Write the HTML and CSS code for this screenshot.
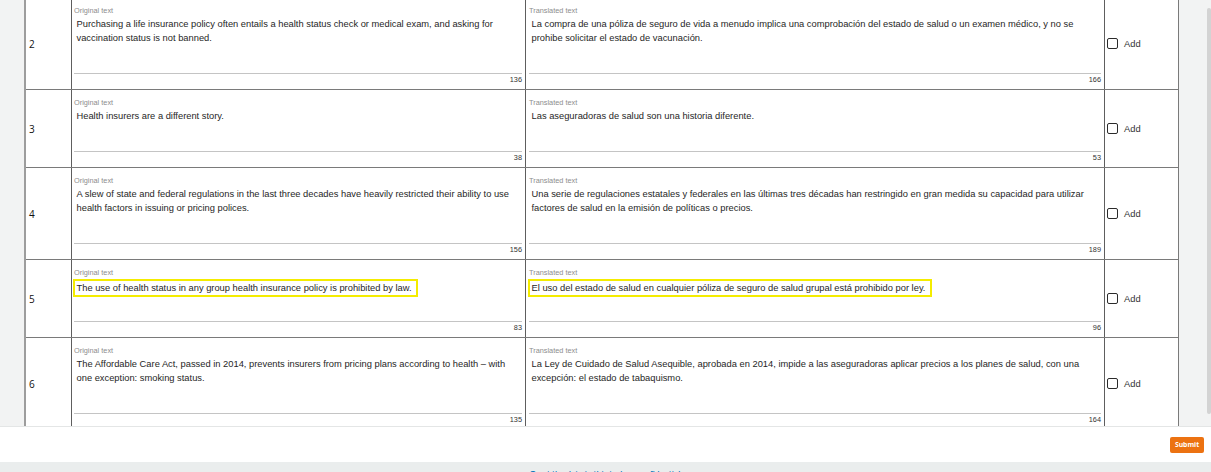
FILE: index.html
```html
<!DOCTYPE html>
<html lang="en">
<head>
<meta charset="utf-8">
<title>Translation review</title>
<link rel="stylesheet" href="styles.css">
</head>
<body>
<div class="page">
  <div class="scroller">
    <div class="grid">
      <div class="row">
        <div class="num">2</div>
        <div class="cell orig">
          <div class="lbl">Original text</div>
          <div class="txt">Purchasing a life insurance policy often entails a health status check or medical exam, and asking for vaccination status is not banned.</div>
          <div class="cnt">136</div>
        </div>
        <div class="cell trans">
          <div class="lbl">Translated text</div>
          <div class="txt">La compra de una póliza de seguro de vida a menudo implica una comprobación del estado de salud o un examen médico, y no se prohibe solicitar el estado de vacunación.</div>
          <div class="cnt">166</div>
        </div>
        <label class="add"><span class="box"></span><span>Add</span></label>
      </div>
      <div class="row">
        <div class="num">3</div>
        <div class="cell orig">
          <div class="lbl">Original text</div>
          <div class="txt">Health insurers are a different story.</div>
          <div class="cnt">38</div>
        </div>
        <div class="cell trans">
          <div class="lbl">Translated text</div>
          <div class="txt">Las aseguradoras de salud son una historia diferente.</div>
          <div class="cnt">53</div>
        </div>
        <label class="add"><span class="box"></span><span>Add</span></label>
      </div>
      <div class="row">
        <div class="num">4</div>
        <div class="cell orig">
          <div class="lbl">Original text</div>
          <div class="txt">A slew of state and federal regulations in the last three decades have heavily restricted their ability to use health factors in issuing or pricing polices.</div>
          <div class="cnt">156</div>
        </div>
        <div class="cell trans">
          <div class="lbl">Translated text</div>
          <div class="txt">Una serie de regulaciones estatales y federales en las últimas tres décadas han restringido en gran medida su capacidad para utilizar factores de salud en la emisión de políticas o precios.</div>
          <div class="cnt">189</div>
        </div>
        <label class="add"><span class="box"></span><span>Add</span></label>
      </div>
      <div class="row">
        <div class="num">5</div>
        <div class="cell orig">
          <div class="lbl">Original text</div>
          <div class="txt"><span class="hl">The use of health status in any group health insurance policy is prohibited by law.</span></div>
          <div class="cnt">83</div>
        </div>
        <div class="cell trans">
          <div class="lbl">Translated text</div>
          <div class="txt"><span class="hl">El uso del estado de salud en cualquier póliza de seguro de salud grupal está prohibido por ley.</span></div>
          <div class="cnt">96</div>
        </div>
        <label class="add"><span class="box"></span><span>Add</span></label>
      </div>
      <div class="row">
        <div class="num">6</div>
        <div class="cell orig">
          <div class="lbl">Original text</div>
          <div class="txt">The Affordable Care Act, passed in 2014, prevents insurers from pricing plans according to health – with one exception: smoking status.</div>
          <div class="cnt">135</div>
        </div>
        <div class="cell trans">
          <div class="lbl">Translated text</div>
          <div class="txt">La Ley de Cuidado de Salud Asequible, aprobada en 2014, impide a las aseguradoras aplicar precios a los planes de salud, con una excepción: el estado de tabaquismo.</div>
          <div class="cnt">164</div>
        </div>
        <label class="add"><span class="box"></span><span>Add</span></label>
      </div>
    </div>
    <div class="thumb"></div>
  </div>
  <div class="footer"><button class="submit" type="button">Submit</button></div>
  <div class="bottombar"><a class="conf" href="#">Treat the data in this task as confidential</a></div>
</div>
</body>
</html>
```

FILE: styles.css
```css
* { box-sizing: border-box; }
html, body { margin: 0; padding: 0; }
body {
  font-family: "Liberation Sans", Arial, sans-serif;
  color: #262626;
  background: #ffffff;
}
.page {
  width: 1211px;
  height: 472px;
  overflow: hidden;
  display: flex;
  flex-direction: column;
}
.scroller {
  position: relative;
  height: 426px;
  flex: none;
  overflow: hidden;
  background: #f2f3f3;
  padding-left: 24px;
}
.grid {
  width: 1155px;
  margin-top: -2px;
  background: #fff;
  border-left: 2px solid #9d9d9d;
  border-right: 1px solid #7a7a7a;
}
.row {
  display: flex;
  border-bottom: 1px solid #7a7a7a;
}
.num {
  width: 46px;
  flex: none;
  border-right: 1px solid #5e5e5e;
  display: flex;
  align-items: center;
  padding-left: 3px;
  font-family: "Open Sans", "Liberation Sans", sans-serif;
  font-size: 10px;
  color: #111;
}
.cell {
  flex: none;
  padding: 8px 3px 4px 3px;
  border-right: 1px solid #5e5e5e;
}
.orig { width: 454px; padding-left: 2px; }
.trans { width: 579px; }
.lbl {
  font-size: 7.33px;
  line-height: 10px;
  color: #8d8d8d;
}
.txt {
  margin-top: 1px;
  padding: 0 2.5px 28px 2.5px;
  font-size: 9.333px;
  line-height: 14px;
  color: #262626;
  border-bottom: 1px solid #c4c4c4;
}
.cnt {
  text-align: right;
  font-size: 7.33px;
  line-height: 11px;
  color: #333;
}
.hl {
  display: inline-block;
  vertical-align: -2px;
  border: 2px solid #f4ec00;
  padding: 0 4.5px 0 1.5px;
  margin: -2px 0 -4px -3.5px;
}
.add {
  width: 73px;
  flex: none;
  display: flex;
  align-items: center;
  gap: 6px;
  padding-left: 2px;
  font-size: 9.333px;
  color: #333;
}
.box {
  width: 11px;
  height: 11px;
  border: 1.3px solid #2b2b2b;
  border-radius: 2px;
  background: #fff;
}
.thumb {
  position: absolute;
  right: 0;
  top: 8px;
  width: 4px;
  height: 406px;
  background: #d3d3d3;
  border-radius: 2px;
}
.footer {
  height: 36px;
  flex: none;
  border-top: 1px solid #e4e6e6;
  background: #fff;
  display: flex;
  align-items: center;
  justify-content: flex-end;
  padding-right: 7px;
}
.submit {
  width: 34px;
  height: 16px;
  padding: 0;
  border: none;
  border-radius: 2px;
  background: #ec7211;
  color: #fff;
  font-family: "Open Sans", "Liberation Sans", sans-serif;
  font-weight: 700;
  font-size: 6.8px;
}
.bottombar {
  height: 30px;
  flex: none;
  background: #eaeded;
  text-align: center;
  padding-top: 3px;
  line-height: 12px;
}
.conf {
  font-family: "Open Sans", "Liberation Sans", sans-serif;
  font-size: 7.6px;
  font-weight: 600;
  line-height: 12px;
  color: #0073bb;
  text-decoration: none;
}
```
